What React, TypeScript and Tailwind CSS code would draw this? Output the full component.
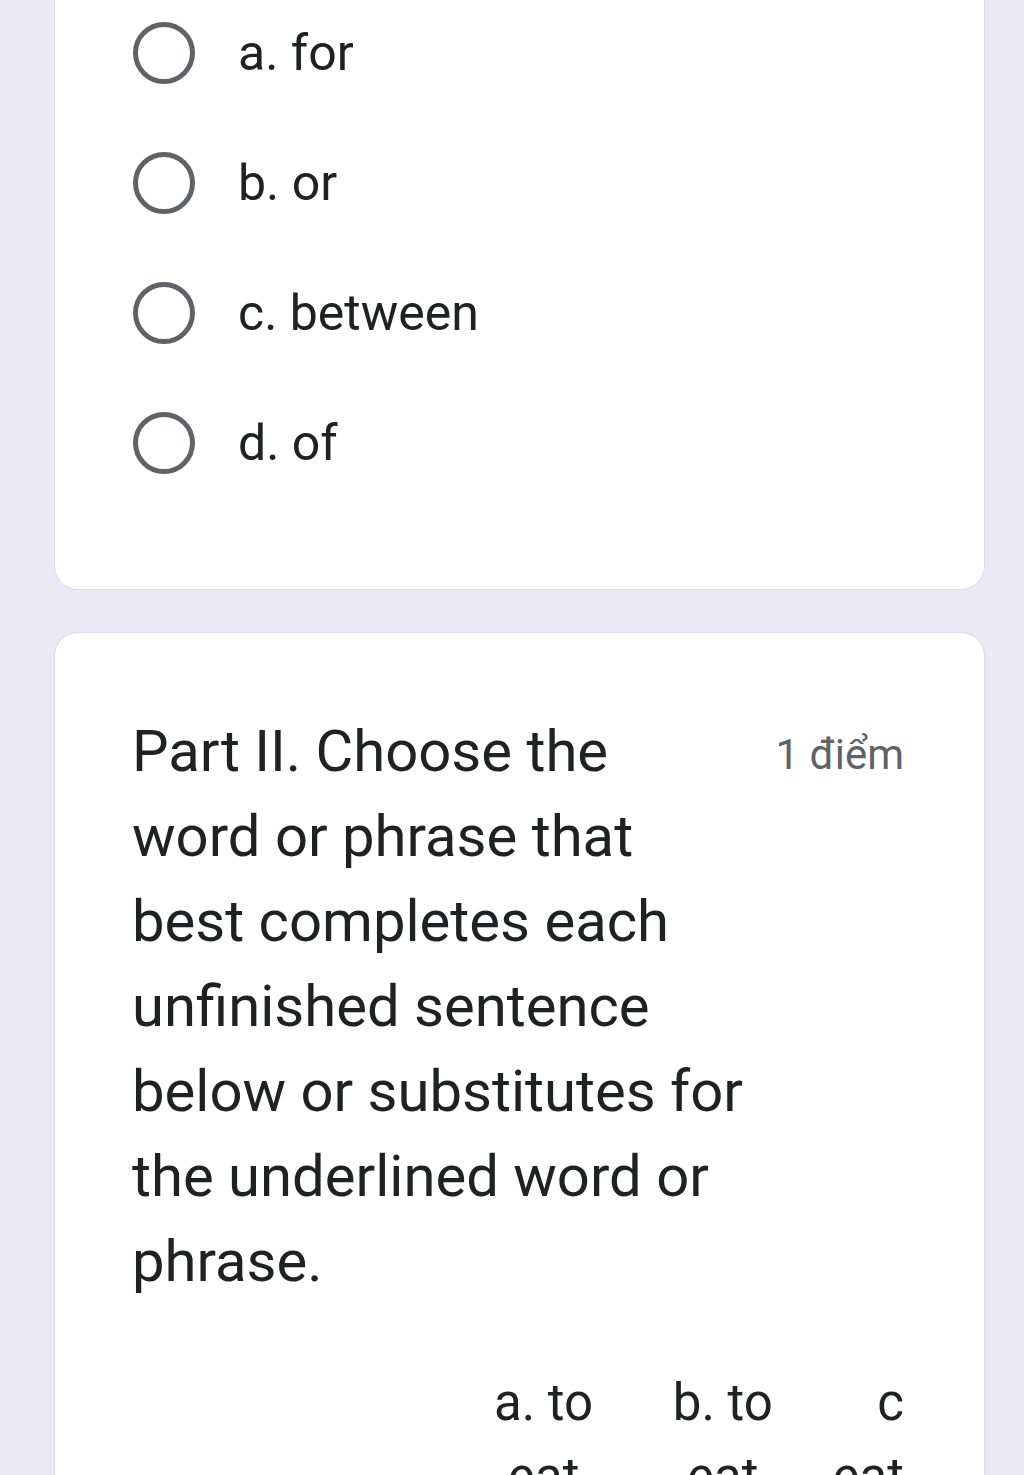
import React from "react";

const options = ["a. for", "b. or", "c. between", "d. of"];

function Radio() {
  return (
    <div className="h-[62px] w-[62px] shrink-0 rounded-full border-[5px] border-[#5f6368]" />
  );
}

export default function App() {
  return (
    <div
      className="h-[1475px] w-[1024px] overflow-hidden bg-[#ece9f6]"
      style={{ fontFamily: "Roboto, 'Noto Sans', sans-serif" }}
    >
      <div className="ml-[54px] w-[931px]">
        <div className="-mt-[40px] rounded-[24px] border border-[#dadce0] bg-white pl-[78px] pr-[80px] pt-[27px] pb-[81px]">
          {options.map((o) => (
            <div key={o} className="flex h-[130px] items-center">
              <Radio />
              <span className="ml-[43px] text-[50px] leading-normal text-[#202124]">{o}</span>
            </div>
          ))}
        </div>

        <div className="mt-[42px] rounded-[24px] border border-[#dadce0] bg-white pl-[77px] pr-[80px] pt-[76px] shadow-[0_1px_2px_rgba(0,0,0,0.06)]">
          <div className="flex items-start justify-between">
            <div className="text-[58px] leading-[85px] text-[#202124]">
              Part II. Choose the
              <br />
              word or phrase that
              <br />
              best completes each
              <br />
              unfinished sentence
              <br />
              below or substitutes for
              <br />
              the underlined word or
              <br />
              phrase.
            </div>
            <div className="pt-[21px] text-[42px] leading-[50px] text-[#5f6368]">1 điểm</div>
          </div>

          <div className="ml-[322px] mt-[62px] flex text-[51px] leading-[74px] text-[#202124]">
            <div className="w-[180px] text-center">
              a. to
              <br />
              eat
            </div>
            <div className="w-[180px] text-center">
              b. to
              <br />
              eat
            </div>
            <div className="w-[92px] text-right">
              c
              <br />
              eat
            </div>
          </div>
          <div className="h-[60px]" />
        </div>
      </div>
    </div>
  );
}
